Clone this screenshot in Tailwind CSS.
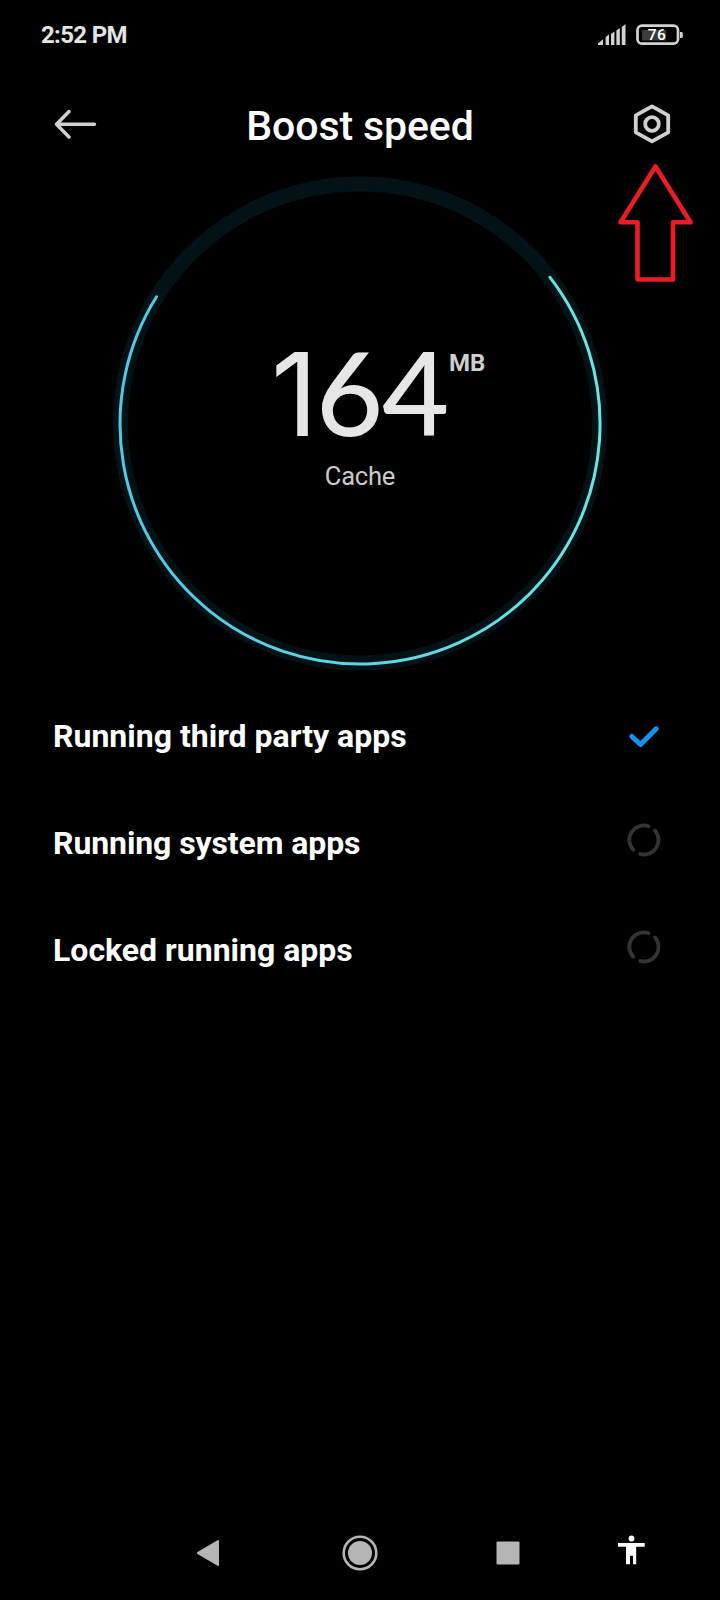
<!DOCTYPE html>
<html lang="en">
<head>
<meta charset="utf-8">
<title>Boost speed</title>
<script src="https://cdn.jsdelivr.net/npm/@tailwindcss/browser@4"></script>
</head>
<body class="bg-black">
<main class="relative flex h-[1600px] w-[720px] flex-col overflow-hidden bg-black font-['Roboto',sans-serif] text-white">
  <!-- Status bar -->
  <div class="flex h-[69px] items-center justify-between pl-10 pr-9">
    <span class="pl-px text-[24px] font-bold leading-none tracking-[-0.65px] text-[#e4e4e4]">2:52 PM</span>
    <svg class="h-[24px] w-[88px]" viewBox="596 23 88 24">
      <g fill="#d2d2d2">
        <path d="M598 45v-1.500l5-4.200V45zM605.600 45v-8l3.400-2.500V45zM611 45V34l3.400-2.500V45zM616.400 45V30.500l3.400-2.500V45zM621.800 45V27l3.700-3V45z"/>
        <rect x="642" y="30" width="24" height="10.500" fill="#3b3b3b"/>
        <rect x="637.500" y="25.700" width="40.500" height="18" rx="4.500" fill="none" stroke="#d2d2d2" stroke-width="2.700"/>
        <path d="M680 32h1.500q1.300 0 1.300 1.500v3q0 1.500-1.300 1.500H680z"/>
      </g>
      <text x="657" y="40" text-anchor="middle" font-size="15.500" font-weight="500" letter-spacing=".4" fill="#fff">76</text>
    </svg>
  </div>
  <!-- Title bar -->
  <header class="flex h-[107px] items-center justify-between pl-[54px] pr-[49px] pt-1.5">
    <svg class="mt-[-3px] h-[30px] w-[43px]" viewBox="54 109 43 30" fill="none" stroke="#d0d0d0" stroke-width="3.400" stroke-linecap="round" stroke-linejoin="round"><path d="M69 111.500 56.500 124.300 69 137M57 124.300h37.500"/></svg>
    <h1 class="mr-[10px] mt-[2px] text-[41px] font-medium leading-none tracking-[-0.1px]">Boost speed</h1>
    <svg class="mt-[-3px] h-[42px] w-[38px]" viewBox="633 103 38 42" fill="none" stroke="#d0d0d0" stroke-width="3.800" stroke-linejoin="round"><path d="M652 106.300 668.200 115.300V132.300L652 141.300 635.800 132.300V115.300z"/><circle cx="652" cy="124" r="6.800"/></svg>
  </header>
  <!-- Cache gauge -->
  <section class="grid h-[506px] justify-items-center">
    <svg class="col-start-1 row-start-1 h-[500px] w-[500px]" viewBox="110 176 500 500" fill="none">
      <defs><linearGradient id="ring" x1="120" x2="600" y1="0" y2="0" gradientUnits="userSpaceOnUse"><stop stop-color="#50c8e6"/><stop offset="1" stop-color="#68e6e0"/></linearGradient></defs>
      <circle cx="360" cy="423.500" r="239.500" stroke="#021217" stroke-width="15"/>
      <path d="M550 277.300A240 240 0 1 1 156.500 296.800" stroke="url(#ring)" stroke-width="3" stroke-linecap="round"/>
    </svg>
    <div class="col-start-1 row-start-1 flex w-[500px] flex-col items-center pt-[160px]">
      <div class="flex h-[116px] w-full items-start pl-[161px] leading-none text-[#e6e6e6]">
        <span class="w-[45px] font-['Inter'] text-[115.500px] font-normal leading-[116px]">1</span>
        <span class="w-[66px] font-['Lato'] text-[116px] font-medium leading-[112px]">6</span>
        <span class="w-[67px] font-['Lato'] text-[116px] font-medium leading-[112px]">4</span>
        <span class="pt-[15px] text-[24px] font-bold text-[#cfcfcf]">MB</span>
      </div>
      <p class="pt-[8px] text-[25.500px] leading-[32px] tracking-[-0.2px] text-[#cbcbcb]">Cache</p>
    </div>
  </section>
  <!-- App groups -->
  <ul class="flex flex-col pl-[53px] pr-[58.5px] text-[32px] font-bold leading-none">
    <li class="flex h-[107px] items-center justify-between"><span>Running third party apps</span>
      <svg class="h-[36px] w-[36px]" viewBox="625.500 718.500 36 36" fill="none" stroke="#1295f0" stroke-width="5" stroke-linecap="round" stroke-linejoin="round"><path d="M631.300 737 640 745 655.700 729.300"/></svg></li>
    <li class="flex h-[107px] items-center justify-between"><span class="tracking-[-0.1px]">Running system apps</span>
      <svg class="mt-[-5px] h-[36px] w-[36px]" viewBox="-18 -18 36 36" fill="none" stroke="#343434" stroke-width="3.800" stroke-linecap="round"><path d="M4.500-13.800A14.500 14.500 0 0 0-10.800 9.800M11-9.500A14.500 14.500 0 0 1-3.700 14"/></svg></li>
    <li class="flex h-[107px] items-center justify-between"><span>Locked running apps</span>
      <svg class="mt-[-5px] h-[36px] w-[36px]" viewBox="-18 -18 36 36" fill="none" stroke="#343434" stroke-width="3.800" stroke-linecap="round"><path d="M4.500-13.800A14.500 14.500 0 0 0-10.800 9.800M11-9.500A14.500 14.500 0 0 1-3.700 14"/></svg></li>
  </ul>
  <!-- Navigation bar -->
  <nav class="mt-auto flex h-[95px] items-center pl-[196px]">
    <svg class="h-[28px] w-[24px]" viewBox="196 1538.500 24 28" fill="#b5b5b5"><path d="M217.500 1539.700q1.500-.7 1.500 1v23.600q0 1.700-1.500 1l-20-11.800q-1.500-1 0-2z"/></svg>
    <svg class="ml-[121.5px] h-[36px] w-[36px]" viewBox="0 0 36 36"><circle cx="18" cy="18" r="16.300" fill="none" stroke="#b5b5b5" stroke-width="2.600"/><circle cx="18" cy="18" r="12" fill="#b5b5b5"/></svg>
    <svg class="ml-[118.5px] h-[24px] w-[24px]" viewBox="0 0 24 24"><rect x=".5" y=".5" width="23" height="23" rx="1" fill="#b5b5b5"/></svg>
    <svg class="ml-[97px] mt-[-5px] h-[30px] w-[28px]" viewBox="617 1534.500 28 30" fill="#fff"><circle cx="631.500" cy="1538" r="2.900"/><path d="M618 1542.500h26.700v3.700h-8.500v17.500h-3.200v-8.500h-3v8.500h-4v-17.500h-8z"/></svg>
  </nav>
  <!-- Pointer to the settings button -->
  <svg class="absolute left-[616px] top-[160px] h-[124px] w-[80px]" viewBox="616 160 80 124" fill="none" stroke="#ed1c24" stroke-width="4.600" stroke-linejoin="round"><path d="M655.500 166.500 690.500 222.300H673V279.500H637.500V222.300H620.500z"/></svg>
</main>
</body>
</html>
